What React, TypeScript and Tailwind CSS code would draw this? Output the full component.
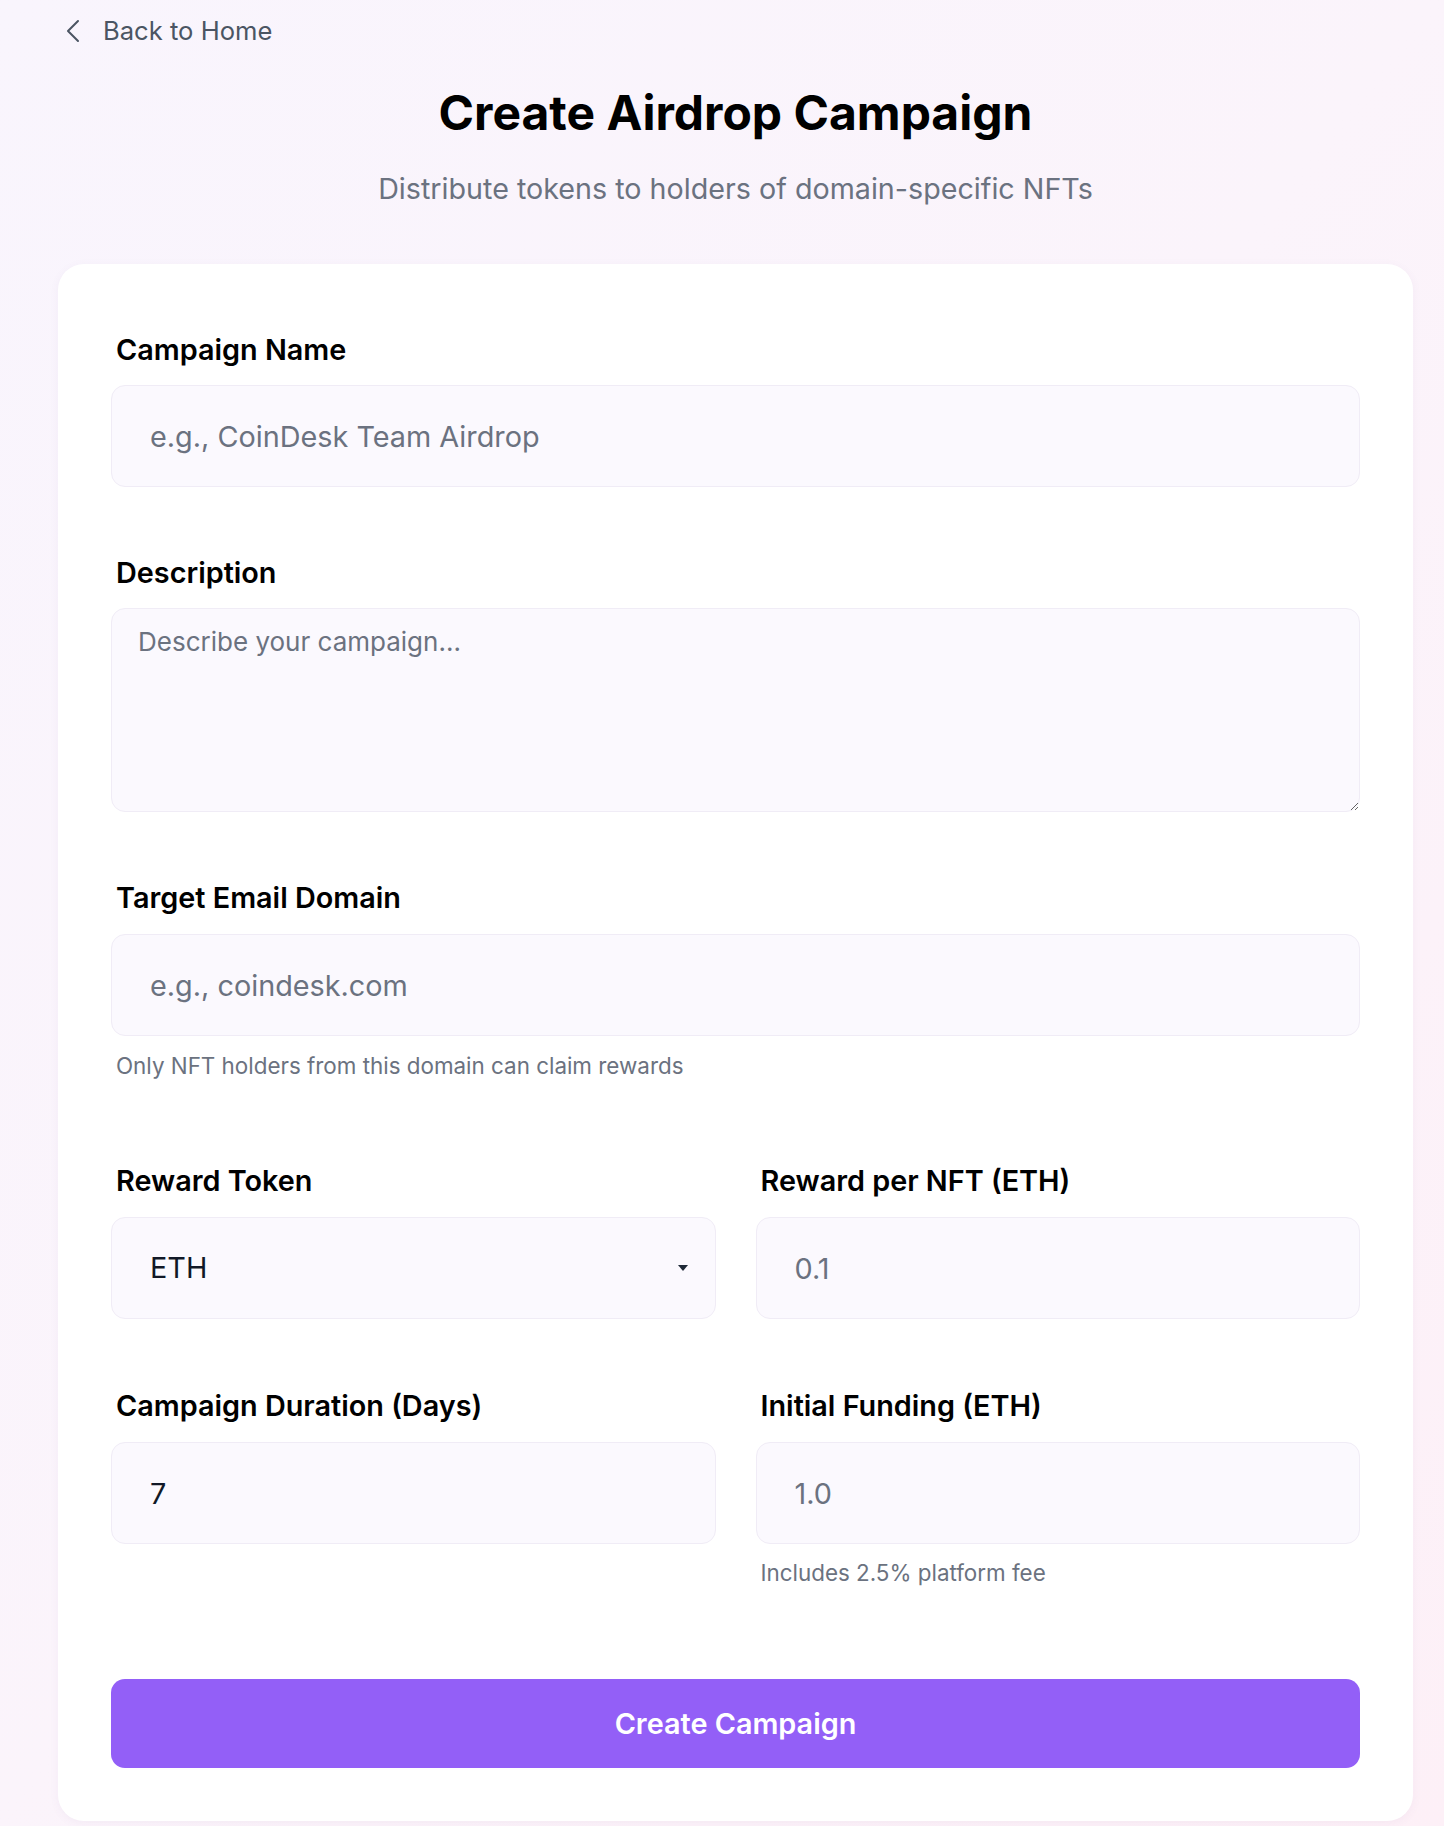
import React from 'react';

const font = { fontFamily: 'Inter, "Noto Sans", sans-serif' };

const Label: React.FC<{ children: React.ReactNode; className?: string }> = ({ children, className = '' }) => (
    <label className={`block pl-[5px] text-[28.8px] leading-[46px] font-semibold text-black ${className}`}>
        {children}
    </label>
);

const inputCls =
    'block w-full h-[102px] rounded-[14px] border border-[#f0ecf6] bg-[#fbf9fe] px-[38px] text-[28.8px] text-[#111827] placeholder:text-[#6b7280] outline-none';

export default function App() {
    return (
        <div
            className="min-h-[1826px] w-full bg-gradient-to-br from-[#f9f5fd] via-[#fbf4fb] to-[#fdf0f7]"
            style={font}
        >
            <div className="ml-[58px] w-[1355px] pt-[12px]">
                {/* back link */}
                <a href="#" className="flex h-[38px] items-center text-[25.6px] text-[#4b5563]">
                    <svg width="16" height="24" viewBox="0 0 16 24" className="ml-[7px] mr-[22px]">
                        <polyline
                            points="13,2 3,12 13,22"
                            fill="none"
                            stroke="#4b5563"
                            strokeWidth="2"
                            strokeLinecap="round"
                            strokeLinejoin="round"
                        />
                    </svg>
                    Back to Home
                </a>

                <h1 className="mt-[34px] text-center text-[48px] leading-[58px] font-bold text-black">
                    Create Airdrop Campaign
                </h1>
                <p className="mt-[25px] text-center text-[28.7px] leading-[44px] text-[#6b7280]">
                    Distribute tokens to holders of domain-specific NFTs
                </p>

                {/* form card */}
                <div className="mt-[53px] rounded-[26px] bg-white px-[53px] pt-[63px] pb-[53px] shadow-[0_2px_10px_rgba(120,80,160,0.06)]">
                    <Label>Campaign Name</Label>
                    <input className={`${inputCls} mt-[12px]`} placeholder="e.g., CoinDesk Team Airdrop" />

                    <Label className="mt-[63px]">Description</Label>
                    <textarea
                        className="mt-[12px] block h-[204px] w-full rounded-[14px] border border-[#f0ecf6] bg-[#fbf9fe] px-[26px] py-[13px] text-[26px] leading-[39px] text-[#111827] placeholder:text-[#6b7280] outline-none"
                        placeholder="Describe your campaign..."
                    />

                    <Label className="mt-[63px]">Target Email Domain</Label>
                    <input className={`${inputCls} mt-[13px]`} placeholder="e.g., coindesk.com" />
                    <p className="mt-[14px] pl-[5px] text-[22.4px] leading-[32px] text-[#6b7280]">
                        Only NFT holders from this domain can claim rewards
                    </p>

                    <div className="mt-[76px] grid grid-cols-2 gap-x-[40px]">
                        <div>
                            <Label>Reward Token</Label>
                            <div className="relative mt-[13px]">
                                <select className={`${inputCls} appearance-none`} defaultValue="ETH">
                                    <option value="ETH">ETH</option>
                                    <option value="USDC">USDC</option>
                                </select>
                                <svg
                                    width="12"
                                    height="8"
                                    viewBox="0 0 12 8"
                                    className="pointer-events-none absolute right-[27px] top-[47px]"
                                >
                                    <polygon points="1,1 11,1 6,7" fill="#1f2937" />
                                </svg>
                            </div>
                        </div>
                        <div>
                            <Label>Reward per NFT (ETH)</Label>
                            <input className={`${inputCls} mt-[13px]`} placeholder="0.1" />
                        </div>
                    </div>

                    <div className="mt-[64px] grid grid-cols-2 gap-x-[40px]">
                        <div>
                            <Label>Campaign Duration (Days)</Label>
                            <input className={`${inputCls} mt-[13px]`} defaultValue="7" />
                        </div>
                        <div>
                            <Label>Initial Funding (ETH)</Label>
                            <input className={`${inputCls} mt-[13px]`} placeholder="1.0" />
                            <p className="mt-[13px] pl-[5px] text-[22.4px] leading-[32px] text-[#6b7280]">
                                Includes 2.5% platform fee
                            </p>
                        </div>
                    </div>

                    <button className="mt-[90px] block h-[89px] w-full rounded-[14px] bg-[#935ff7] text-[28.8px] font-semibold text-white">
                        Create Campaign
                    </button>
                </div>
            </div>
        </div>
    );
}
